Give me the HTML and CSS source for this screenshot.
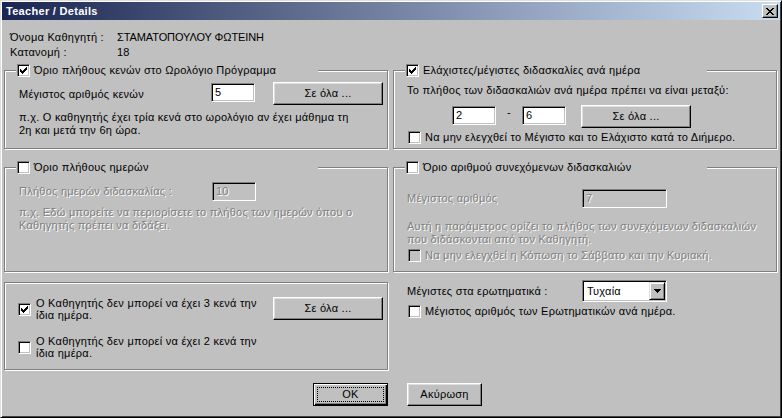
FILE: index.html
```html
<!DOCTYPE html>
<html lang="el">
<head>
<meta charset="utf-8">
<title>Teacher / Details</title>
<link rel="stylesheet" href="styles.css">
</head>
<body>
<div class="window">
  <div class="titlebar">
    <span class="title">Teacher / Details</span>
    <span class="close-btn"><svg width="8" height="7" viewBox="0 0 8 7" shape-rendering="crispEdges"><path d="M0 0h2v1H0z M6 0h2v1H6z M1 1h2v1H1z M5 1h2v1H5z M2 2h4v1H2z M3 3h2v1H3z M2 4h4v1H2z M1 5h2v1H1z M5 5h2v1H5z M0 6h2v1H0z M6 6h2v1H6z" fill="#000"/></svg></span>
  </div>

  <div class="info">
    <div class="info-row"><span class="info-label">Όνομα Καθηγητή :</span><span class="caps">ΣΤΑΜΑΤΟΠΟΥΛΟΥ ΦΩΤΕΙΝΗ</span></div>
    <div class="info-row"><span class="info-label">Κατανομή :</span><span>18</span></div>
  </div>

  <div class="row row1">
    <div class="group g-top g1">
      <div class="legend"><span class="cb"><svg class="check" width="7" height="7" viewBox="0 0 7 7" shape-rendering="crispEdges"><path d="M6 0h1v1h-1z M5 1h2v1h-2z M0 2h1v1H0z M4 2h3v1H4z M0 3h2v1H0z M3 3h3v1H3z M0 4h5v1H0z M1 5h3v1H1z M2 6h1v1H2z" fill="#000"/></svg></span><span class="cb-text">Όριο πλήθους κενών στο Ωρολόγιο Πρόγραμμα</span></div>
      <div class="field-row">
        <span class="field-label w192">Μέγιστος αριθμός κενών</span>
        <span class="edit w44">5</span>
        <span class="btn w110 ml18">Σε όλα ...</span>
      </div>
      <p class="hint mt6">π.χ. Ο καθηγητής έχει τρία κενά στο ωρολόγιο αν έχει μάθημα τη<br>2η και μετά την 6η ώρα.</p>
    </div>

    <div class="group g-top g4">
      <div class="legend"><span class="cb"><svg class="check" width="7" height="7" viewBox="0 0 7 7" shape-rendering="crispEdges"><path d="M6 0h1v1h-1z M5 1h2v1h-2z M0 2h1v1H0z M4 2h3v1H4z M0 3h2v1H0z M3 3h3v1H3z M0 4h5v1H0z M1 5h3v1H1z M2 6h1v1H2z" fill="#000"/></svg></span><span class="cb-text">Ελάχιστες/μέγιστες διδασκαλίες ανά ημέρα</span></div>
      <p class="hint">Το πλήθος των διδασκαλιών ανά ημέρα πρέπει να είναι μεταξύ:</p>
      <div class="range-row">
        <span class="edit w44">2</span>
        <span class="dash">-</span>
        <span class="edit w44">6</span>
        <span class="btn w110 ml15">Σε όλα ...</span>
      </div>
      <div class="cb-row mt3"><span class="cb"></span><span class="cb-text">Να μην ελεγχθεί το Μέγιστο και το Ελάχιστο κατά το Διήμερο.</span></div>
    </div>
  </div>

  <div class="row row2">
    <div class="group g-mid g2">
      <div class="legend"><span class="cb"></span><span class="cb-text">Όριο πλήθους ημερών</span></div>
      <div class="field-row short">
        <span class="field-label w193 disabled">Πλήθος ημερών διδασκαλίας :</span>
        <span class="edit w44 edit-disabled">10</span>
      </div>
      <p class="hint mt5 disabled">π.χ. Εδώ μπορείτε να περιορίσετε το πλήθος των ημερών όπου ο<br>Καθηγητής πρέπει να διδάξει.</p>
    </div>

    <div class="group g-mid g5">
      <div class="legend"><span class="cb"></span><span class="cb-text">Όριο αριθμού συνεχόμενων διδασκαλιών</span></div>
      <div class="field-row short">
        <span class="field-label w175 disabled">Μέγιστος αριθμός</span>
        <span class="edit w85 edit-disabled">7</span>
      </div>
      <p class="hint mt12 disabled">Αυτή η παράμετρος ορίζει το πλήθος των συνεχόμενων διδασκαλιών<br>που διδάσκονται από τον Καθηγητή.</p>
      <div class="cb-row mt3"><span class="cb cb-disabled"></span><span class="cb-text disabled">Να μην ελεγχθεί η Κόπωση το Σάββατο και την Κυριακή.</span></div>
    </div>
  </div>

  <div class="row row3">
    <div class="group g-low g3">
      <div class="cb-row two-line">
        <span class="cb"><svg class="check" width="7" height="7" viewBox="0 0 7 7" shape-rendering="crispEdges"><path d="M6 0h1v1h-1z M5 1h2v1h-2z M0 2h1v1H0z M4 2h3v1H4z M0 3h2v1H0z M3 3h3v1H3z M0 4h5v1H0z M1 5h3v1H1z M2 6h1v1H2z" fill="#000"/></svg></span>
        <span class="cb-text ml-label">Ο Καθηγητής δεν μπορεί να έχει 3 κενά την<br>ίδια ημέρα.</span>
        <span class="btn w110 top">Σε όλα ...</span>
      </div>
      <div class="cb-row two-line mt14">
        <span class="cb"></span>
        <span class="cb-text ml-label">Ο Καθηγητής δεν μπορεί να έχει 2 κενά την<br>ίδια ημέρα.</span>
      </div>
    </div>

    <div class="plain">
      <div class="field-row select-row">
        <span class="field-label w175">Μέγιστες στα ερωτηματικά :</span>
        <span class="select"><span class="select-text">Τυχαία</span><span class="select-btn"><svg width="7" height="4" viewBox="0 0 7 4" shape-rendering="crispEdges"><path d="M0 0h7v1H0z M1 1h5v1H1z M2 2h3v1H2z M3 3h1v1H3z" fill="#000"/></svg></span></span>
      </div>
      <div class="cb-row mt3"><span class="cb"></span><span class="cb-text">Μέγιστος αριθμός των Ερωτηματικών ανά ημέρα.</span></div>
    </div>
  </div>

  <div class="actions">
    <span class="btn btn-default w75">OK</span>
    <span class="btn w75 ml19">Ακύρωση</span>
  </div>
</div>
</body>
</html>
```
FILE: styles.css
```css
html, body {
  margin: 0;
  padding: 0;
  background: #c0c0c0;
}

body {
  font-family: "Liberation Sans", Arial, sans-serif;
  font-size: 11px;
  letter-spacing: 0.25px;
  color: #000;
}

.window {
  width: 782px;
  height: 418px;
  box-sizing: border-box;
  border-top: 1px solid #dfdfdf;
  border-left: 1px solid #dfdfdf;
  border-right: 1px solid #000;
  border-bottom: 1px solid #000;
  box-shadow: inset 1px 1px #fff, inset -1px -1px #404040;
  padding: 1px;
  background: #c0c0c0;
  overflow: hidden;
}

/* Title bar */
.titlebar {
  height: 18px;
  display: flex;
  justify-content: space-between;
  align-items: flex-start;
  background: linear-gradient(to right, #1a2552 0%, #5a6688 35%, #98a8c4 70%, #c8dcf0 100%);
}

.title {
  color: #fff;
  font-weight: bold;
  font-size: 11px;
  line-height: 18px;
  padding-left: 4px;
  letter-spacing: 0.3px;
}

.close-btn {
  width: 16px;
  height: 14px;
  margin-top: 2px;
  margin-right: 2px;
  box-sizing: border-box;
  background: #c0c0c0;
  border-top: 1px solid #fff;
  border-left: 1px solid #fff;
  border-right: 1px solid #000;
  border-bottom: 1px solid #000;
  box-shadow: inset -1px -1px #808080;
  display: flex;
  align-items: center;
  justify-content: center;
}

.close-btn svg {
  display: block;
  margin-left: -1px;
}

/* Info */
.info {
  padding: 10px 0 0 8px;
}

.info-row {
  display: flex;
  line-height: 15px;
  height: 15px;
  white-space: nowrap;
}

.info-label {
  width: 107px;
}

.caps {
  letter-spacing: -0.1px;
}

/* Rows of group boxes */
.row {
  display: grid;
  grid-template-columns: 384px 384px;
  column-gap: 5px;
  margin-left: 2px;
  align-items: start;
}

.row1 { margin-top: 10px; }
.row2 { margin-top: 18px; }
.row3 { margin-top: 8px; }

.group {
  position: relative;
  box-sizing: border-box;
  border: 1px solid #808080;
  box-shadow: inset 1px 1px #fff, 1px 1px #fff;
}

.g-top { height: 79px; }
.g-mid { height: 105px; }
.g-low { height: 88px; margin-top: 2px; }

.g1 { padding: 11px 0 0 14px; }
.g2 { padding: 14px 0 0 14px; }
.g3 { padding: 14px 0 0 13px; }
.g4 { padding: 13px 0 0 13px; }
.g5 { padding: 21px 0 0 13px; }

.plain { padding-left: 14px; }

.legend {
  position: absolute;
  top: -8px;
  left: 11px;
  width: 302px;
  height: 15px;
  background: #c0c0c0;
  display: flex;
  align-items: center;
  white-space: nowrap;
}

.legend .cb { margin-left: 1px; }

/* Checkbox */
.cb {
  flex: none;
  width: 13px;
  height: 13px;
  box-sizing: border-box;
  padding: 2px;
  background: #fff;
  border-top: 1px solid #808080;
  border-left: 1px solid #808080;
  border-right: 1px solid #fff;
  border-bottom: 1px solid #fff;
  box-shadow: inset 1px 1px #000, inset -1px -1px #c0c0c0;
}

.cb-disabled { background: #c0c0c0; }

.check { display: block; }

.cb-text {
  margin-left: 4px;
  white-space: nowrap;
  line-height: 13px;
}

.cb-row {
  display: flex;
  align-items: center;
}

.g4 .cb-row .cb,
.g5 .cb-row .cb,
.plain .cb-row .cb { margin-left: 1px; }

.two-line .cb-text {
  line-height: 12px;
}

.ml-label {
  margin-left: 5px;
  width: 237px;
}

.top { align-self: flex-start; }

/* Fields */
.field-row {
  display: flex;
  align-items: flex-start;
  height: 23px;
}

.field-row.short { height: 19px; }
.select-row { height: 22px; }

.field-label {
  flex: none;
  line-height: 23px;
  padding-top: 1px;
  white-space: nowrap;
}

.short .field-label { line-height: 19px; padding-top: 0; }
.select-row .field-label { line-height: 22px; padding-top: 0; }

.w192 { width: 192px; }
.w193 { width: 193px; }
.w175 { width: 175px; }
.w44 { width: 44px; }
.w85 { width: 85px; }
.w110 { width: 110px; }
.w75 { width: 75px; }

.edit {
  flex: none;
  height: 19px;
  box-sizing: border-box;
  background: #fff;
  border-top: 1px solid #808080;
  border-left: 1px solid #808080;
  border-right: 1px solid #fff;
  border-bottom: 1px solid #fff;
  box-shadow: inset 1px 1px #000, inset -1px -1px #c0c0c0;
  padding-left: 3px;
  line-height: 17px;
  white-space: nowrap;
}

.field-row .edit { margin-top: 1px; }
.short .edit { margin-top: 0; }

.edit-disabled {
  background: #c0c0c0;
  color: #808080;
  text-shadow: 1px 1px 0 #fff;
}

.range-row {
  display: flex;
  align-items: flex-start;
  height: 23px;
  margin-top: 8px;
  margin-left: 45px;
}

.range-row .edit { margin-top: 1px; }

.dash {
  width: 26px;
  text-align: center;
  line-height: 15px;
}

/* Buttons */
.btn {
  flex: none;
  height: 23px;
  box-sizing: border-box;
  background: #c0c0c0;
  border-top: 1px solid #fff;
  border-left: 1px solid #fff;
  border-right: 1px solid #000;
  border-bottom: 1px solid #000;
  box-shadow: inset -1px -1px #808080, inset 1px 1px #dfdfdf;
  display: flex;
  align-items: center;
  justify-content: center;
  white-space: nowrap;
  line-height: 13px;
}

.btn-default {
  border: 1px solid #000;
  box-shadow: inset 1px 1px #fff, inset -1px -1px #000, inset -2px -2px #808080;
  outline: 1px dotted #000;
  outline-offset: -5px;
}

/* Select */
.select {
  flex: none;
  width: 85px;
  height: 22px;
  box-sizing: border-box;
  background: #fff;
  border-top: 1px solid #808080;
  border-left: 1px solid #808080;
  border-right: 1px solid #fff;
  border-bottom: 1px solid #fff;
  box-shadow: inset 1px 1px #000, inset -1px -1px #c0c0c0;
  padding: 1px;
  display: flex;
}

.select-text {
  flex: 1;
  padding-left: 3px;
  line-height: 18px;
}

.select-btn {
  width: 16px;
  height: 18px;
  box-sizing: border-box;
  background: #c0c0c0;
  border-top: 1px solid #dfdfdf;
  border-left: 1px solid #dfdfdf;
  border-right: 1px solid #000;
  border-bottom: 1px solid #000;
  box-shadow: inset 1px 1px #fff, inset -1px -1px #808080;
  display: flex;
  align-items: center;
  justify-content: center;
}

.select-btn svg { display: block; }

/* Text */
.hint {
  margin: 0;
  line-height: 13px;
  white-space: nowrap;
}

.disabled {
  color: #808080;
  text-shadow: 1px 1px 0 #fff;
}

/* Actions */
.actions {
  display: flex;
  margin-top: 13px;
  padding-left: 311px;
}

/* Spacing utilities (last so they win over component defaults) */
.ml15 { margin-left: 15px; }
.ml18 { margin-left: 18px; }
.ml19 { margin-left: 19px; }
.mt3 { margin-top: 3px; }
.mt5 { margin-top: 5px; }
.mt6 { margin-top: 6px; }
.mt12 { margin-top: 12px; }
.mt14 { margin-top: 14px; }
```
